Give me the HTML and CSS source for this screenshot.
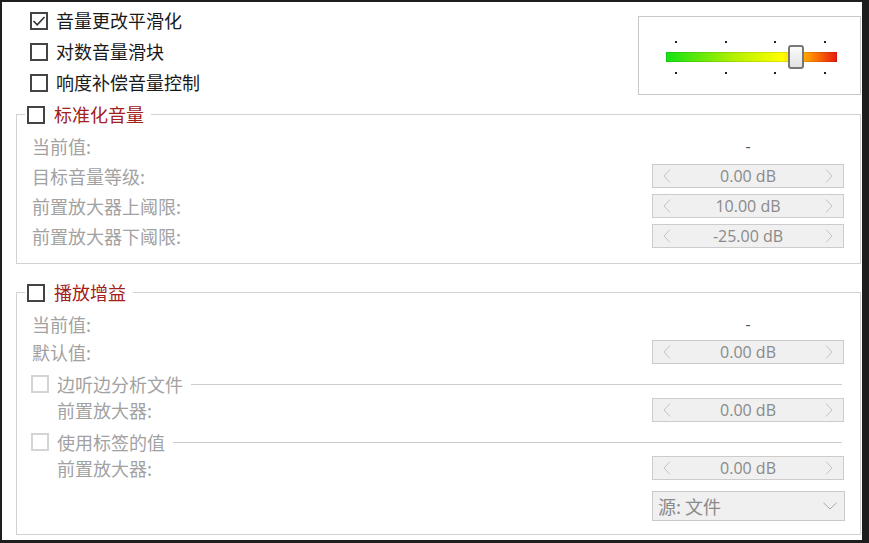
FILE: index.html
```html
<!DOCTYPE html>
<html>
<head>
    <title>音量设置</title>
    <link rel="stylesheet" href="styles.css">
</head>
<body>
    <div class="window">
        <!-- top options and volume meter -->
        <div class="top">
            <div class="opts">
                <div class="check">
                    <span class="box"><svg width="14" height="14" viewBox="0 0 14 14"><path d="M1.5 7 L5.2 10.8 L12.5 3" fill="none" stroke="#333" stroke-width="1.6"/></svg></span>
                    <span>音量更改平滑化</span>
                </div>
                <div class="check"><span class="box"></span><span>对数音量滑块</span></div>
                <div class="check"><span class="box"></span><span>响度补偿音量控制</span></div>
            </div>
            <div class="meter">
                <div class="scale">
                    <div class="ticks"><i></i><i></i><i></i><i></i></div>
                    <div class="track"></div>
                    <div class="ticks"><i></i><i></i><i></i><i></i></div>
                    <div class="thumb"></div>
                </div>
            </div>
        </div>

        <!-- normalisation -->
        <fieldset class="group">
            <legend><span class="lg"><span class="box"></span><span>标准化音量</span></span></legend>
            <div class="rows">
                <span class="label">当前值:</span><span class="value">-</span>
                <span class="label">目标音量等级:</span>
                <div class="spin"><svg class="arr" width="8" height="14" viewBox="0 0 8 14"><path d="M7 0.5 L1 7 L7 13.5" /></svg><span>0.00 dB</span><svg class="arr" width="8" height="14" viewBox="0 0 8 14"><path d="M1 0.5 L7 7 L1 13.5" /></svg></div>
                <span class="label">前置放大器上阈限:</span>
                <div class="spin"><svg class="arr" width="8" height="14" viewBox="0 0 8 14"><path d="M7 0.5 L1 7 L7 13.5" /></svg><span>10.00 dB</span><svg class="arr" width="8" height="14" viewBox="0 0 8 14"><path d="M1 0.5 L7 7 L1 13.5" /></svg></div>
                <span class="label">前置放大器下阈限:</span>
                <div class="spin"><svg class="arr" width="8" height="14" viewBox="0 0 8 14"><path d="M7 0.5 L1 7 L7 13.5" /></svg><span>-25.00 dB</span><svg class="arr" width="8" height="14" viewBox="0 0 8 14"><path d="M1 0.5 L7 7 L1 13.5" /></svg></div>
            </div>
        </fieldset>

        <!-- replay gain -->
        <fieldset class="group gain">
            <legend><span class="lg"><span class="box"></span><span>播放增益</span></span></legend>
            <div class="gain-body">
                <div class="row">
                    <span class="label">当前值:</span><span class="value">-</span>
                </div>
                <div class="row second">
                    <span class="label">默认值:</span>
                    <div class="spin"><svg class="arr" width="8" height="14" viewBox="0 0 8 14"><path d="M7 0.5 L1 7 L7 13.5" /></svg><span>0.00 dB</span><svg class="arr" width="8" height="14" viewBox="0 0 8 14"><path d="M1 0.5 L7 7 L1 13.5" /></svg></div>
                </div>

                <div class="sub">
                    <div class="sub-head"><span class="box off"></span><span>边听边分析文件</span><span class="rule"></span></div>
                    <div class="row">
                        <span class="label indent">前置放大器:</span>
                        <div class="spin"><svg class="arr" width="8" height="14" viewBox="0 0 8 14"><path d="M7 0.5 L1 7 L7 13.5" /></svg><span>0.00 dB</span><svg class="arr" width="8" height="14" viewBox="0 0 8 14"><path d="M1 0.5 L7 7 L1 13.5" /></svg></div>
                    </div>
                </div>

                <div class="sub">
                    <div class="sub-head"><span class="box off"></span><span>使用标签的值</span><span class="rule"></span></div>
                    <div class="row">
                        <span class="label indent">前置放大器:</span>
                        <div class="spin"><svg class="arr" width="8" height="14" viewBox="0 0 8 14"><path d="M7 0.5 L1 7 L7 13.5" /></svg><span>0.00 dB</span><svg class="arr" width="8" height="14" viewBox="0 0 8 14"><path d="M1 0.5 L7 7 L1 13.5" /></svg></div>
                    </div>
                </div>

                <div class="select">
                    <span>源: 文件</span>
                    <svg width="14" height="8" viewBox="0 0 14 8"><path d="M0.5 0.8 L7 7 L13.5 0.8" fill="none" stroke="#a8a8a8" stroke-width="1"/></svg>
                </div>
            </div>
        </fieldset>
    </div>
</body>
</html>
```

FILE: styles.css
```css
* {
    box-sizing: border-box;
}

body {
    margin: 0;
    background: #1e1e1e;
    font-family: "Noto Sans CJK SC", sans-serif;
    font-size: 18px;
    color: #1a1a1a;
}

.window {
    width: 869px;
    height: 543px;
    background: #fff;
    border-style: solid;
    border-color: #1e1e1e;
    border-width: 2px 7px 3px 2px;
    padding: 0 1px 0 14px;
}

/* top part */
.top {
    display: flex;
    justify-content: space-between;
    align-items: flex-start;
    height: 102px;
}

.opts {
    padding: 3px 0 0 14px;
}

.check {
    display: flex;
    align-items: center;
    gap: 8px;
    height: 31px;
    line-height: 31px;
}

.box {
    width: 18px;
    height: 18px;
    flex: none;
    border: 2px solid #444;
    background: #fff;
    display: flex;
    align-items: center;
    justify-content: center;
}

.box.off {
    border-color: #d4d4d4;
}

/* volume meter */
.meter {
    margin-top: 14px;
    width: 223px;
    height: 79px;
    border: 1px solid #c8c8c8;
    padding: 24px 0 0 27px;
}

.scale {
    position: relative;
    width: 171px;
}

.ticks {
    display: flex;
    justify-content: space-between;
    padding: 0 11px 0 9px;
    height: 2px;
}

.ticks i {
    width: 2px;
    height: 2px;
    background: #222;
}

.track {
    height: 10px;
    margin: 9px 0 10px;
    background: linear-gradient(to right, #14e214 0%, #b4f000 40%, #ffff00 68%, #ff8a00 85%, #e81810 100%);
    box-shadow: inset 0 0 0 1px rgba(0, 0, 0, 0.1);
}

.thumb {
    position: absolute;
    left: 122px;
    top: 4px;
    width: 16px;
    height: 24px;
    border: 2px solid #787878;
    border-radius: 3px;
    background: linear-gradient(#fbfbfb, #e2e2e2);
}

/* group boxes */
.group {
    margin: 0;
    min-width: 0;
    border: 1px solid #d2d2d2;
    padding: 9px 16px 15px 8px;
}

.group.gain {
    margin-top: 18px;
    padding-bottom: 13px;
}

.group legend {
    padding: 0 7px 0 2px;
}

.lg {
    display: flex;
    align-items: center;
    gap: 9px;
    height: 21px;
    line-height: 21px;
    color: #a3201c;
}

.label {
    color: #a2a2a2;
    line-height: 24px;
}

.label.indent {
    padding-left: 26px;
}

.value {
    text-align: center;
    color: #555;
    font-family: "Open Sans", sans-serif;
    font-size: 16px;
}

.rows {
    display: grid;
    grid-template-columns: 1fr 192px;
    grid-auto-rows: 24px;
    row-gap: 6px;
    align-items: center;
    margin-left: 7px;
}

.gain-body {
    display: flex;
    flex-direction: column;
    margin-left: 7px;
}

.row {
    display: grid;
    grid-template-columns: 1fr 192px;
    height: 24px;
    align-items: center;
}

.row.second {
    margin-top: 4px;
}

.spin {
    height: 24px;
    border: 1px solid #cccccc;
    background: #f0f0f0;
    display: flex;
    align-items: center;
    justify-content: space-between;
    padding: 0 10px;
    font-family: "Open Sans", sans-serif;
    font-size: 16px;
    color: #8a8a8a;
}

.arr path {
    fill: none;
    stroke: #c2c2c2;
    stroke-width: 1;
}

/* sub sections */
.sub {
    margin-top: 9px;
    margin-left: -1px;
}

.sub-head {
    display: flex;
    align-items: center;
    gap: 8px;
    height: 22px;
    line-height: 22px;
    color: #a2a2a2;
}

.rule {
    flex: 1;
    height: 1px;
    background: #cdcdcd;
    margin-right: 2px;
}

.sub .row {
    margin-top: 3px;
}

.select {
    margin-top: 11px;
    margin-right: -1px;
    align-self: flex-end;
    width: 193px;
    height: 30px;
    border: 1px solid #c8c8c8;
    background: #f0f0f0;
    display: flex;
    align-items: center;
    justify-content: space-between;
    padding: 0 7px 0 5px;
    color: #8a8a8a;
}
```
